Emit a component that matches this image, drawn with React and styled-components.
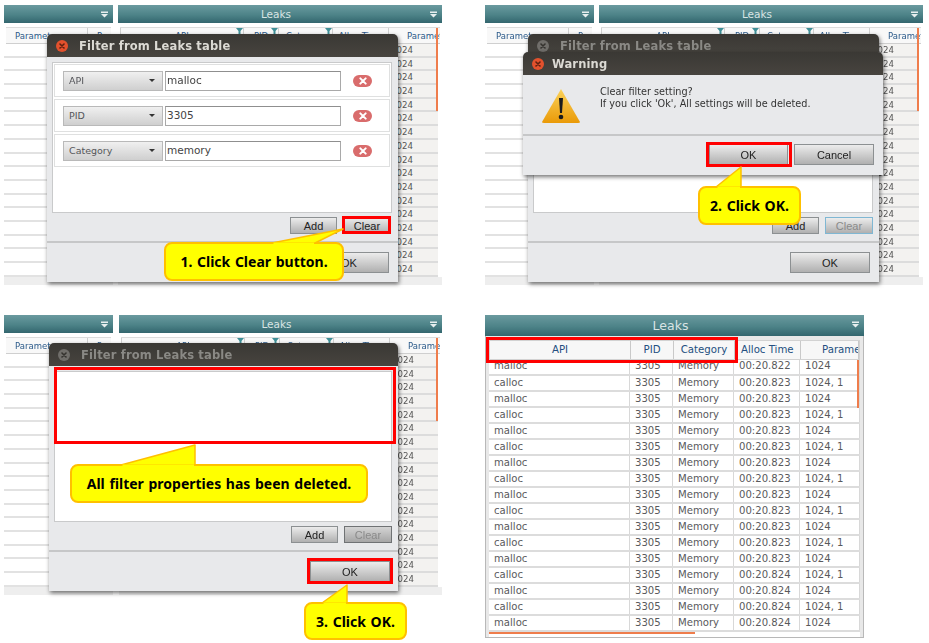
import React from 'react';
import styled, { createGlobalStyle } from 'styled-components';

const Global = createGlobalStyle`
  html, body {
    margin: 0;
    background: #fff;
    font-family: "DejaVu Sans", sans-serif;
  }
`;

const Page = styled.div`
  width: 929px;
  height: 643px;
  overflow: hidden;
  box-sizing: border-box;
  padding: 5px 0 0 4px;
  display: grid;
  grid-template-columns: 481px 444px;
  grid-template-rows: 310px 328px;
  filter: blur(0.3px);
`;

const Shot = styled.div`
  position: relative;
`;

const Desktop = styled.div`
  width: 438px;
  height: 280px;
  display: flex;
  gap: ${(p) => p.$gap}px;
  overflow: hidden;
`;

const Pane = styled.div`
  position: relative;
  width: ${(p) => (p.$wide ? 'auto' : '109px')};
  flex: ${(p) => (p.$wide ? 1 : 'none')};
  display: flex;
  flex-direction: column;
  background: #fff;
  min-width: 0;
  overflow: hidden;
`;

const PaneTitle = styled.div`
  position: relative;
  height: 18px;
  flex: none;
  display: flex;
  align-items: center;
  justify-content: center;
  padding-right: 8px;
  background: linear-gradient(#6a9a9f, #4d8388 55%, #33666e);
  color: #d9e4e4;
  font-size: 10.5px;
`;

const MenuMark = styled.svg`
  position: absolute;
  right: 5px;
  top: 6px;
  width: 7px;
  height: 7px;
`;

const Head = styled.div`
  height: 17px;
  margin: 4px 2px 0;
  flex: none;
  display: grid;
  grid-template-columns: ${(p) => p.$cols};
  background: #f8f8f8;
  border-top: 1px solid #dcdcdc;
  border-bottom: 1px solid #cfcfcf;
  box-sizing: border-box;
`;

const HeadCell = styled.div`
  position: relative;
  border-left: 1px solid ${(p) => (p.$plain ? 'transparent' : '#d0d0d0')};
  color: #2b5a8a;
  font-size: 8.5px;
  line-height: 16px;
  text-align: ${(p) => (p.$indent ? 'left' : 'center')};
  padding-left: ${(p) => p.$indent || 0}px;
  white-space: nowrap;
  overflow: hidden;
`;

const FunnelMark = styled.svg`
  position: absolute;
  right: 0;
  top: 0;
  width: 7px;
  height: 6px;
`;

const Rows = styled.div`
  flex: none;
  margin: 0 ${(p) => (p.$flush ? 2 : 4)}px 0 ${(p) => (p.$flush ? 0 : 2)}px;
`;

const PaneEdge = styled.div`
  flex: 1;
  background: #eeeeee;
`;

const BgRow = styled.div`
  height: 13.7px;
  box-sizing: border-box;
  padding-left: 271px;
  background: #f3f2f0;
  border-bottom: 2px solid #dcdcdc;
  color: #555;
  font-size: 8.6px;
  line-height: 12px;
  white-space: nowrap;
  overflow: hidden;
`;

const LeftRow = styled.div`
  height: 13.7px;
  box-sizing: border-box;
  border-bottom: 2px solid #e2e2e2;
  background: #fff;
`;

const ScrollY = styled.div`
  position: absolute;
  right: ${(p) => p.$right}px;
  top: ${(p) => p.$top}px;
  width: 2.5px;
  height: ${(p) => p.$h}px;
  background: #ef7d4c;
`;

const Dialog = styled.div`
  position: absolute;
  left: ${(p) => p.$left}px;
  top: ${(p) => p.$top}px;
  width: ${(p) => p.$w}px;
  height: ${(p) => p.$h}px;
  display: flex;
  flex-direction: column;
  background: #e8e9eb;
  border-radius: 5px 5px 0 0;
  box-shadow: 1px 2px 4px rgba(0, 0, 0, 0.55);
  overflow: hidden;
`;

const TitleBar = styled.div`
  height: 23px;
  flex: none;
  display: flex;
  align-items: center;
  padding-left: 9px;
  gap: ${(p) => p.$gap}px;
  background: linear-gradient(#3a3834, #47443f);
  color: ${(p) => (p.$dim ? '#8a8985' : '#dcdad4')};
  font-size: 11.5px;
  font-weight: bold;
  letter-spacing: 0.15px;
`;

const CloseDot = styled.div`
  width: 12px;
  height: 12px;
  border-radius: 50%;
  display: flex;
  align-items: center;
  justify-content: center;
  background: ${(p) => (p.$dim ? '#706e6a' : '#e2512d')};
  color: ${(p) => (p.$dim ? '#35332f' : '#5e2010')};
`;

const DialogBody = styled.div`
  height: 184px;
  flex: none;
  display: flex;
  flex-direction: column;
  box-sizing: border-box;
  padding: 5px 6px 0 5px;
`;

const ListBox = styled.div`
  height: 151px;
  flex: none;
  box-sizing: border-box;
  background: #fff;
  border: 1px solid #c9cacb;
  padding: 1px;
  display: flex;
  flex-direction: column;
  gap: 2px;
`;

const FilterRow = styled.div`
  height: 33px;
  flex: none;
  box-sizing: border-box;
  border: 1px solid #dfe0e0;
  display: flex;
  align-items: center;
  padding-left: 8px;
`;

const Combo = styled.div`
  width: 100px;
  height: 20px;
  box-sizing: border-box;
  display: flex;
  align-items: center;
  justify-content: space-between;
  padding: 0 7px 0 5px;
  border: 1px solid #b9b9b9;
  background: linear-gradient(#f0f0f0, #cfcfcf);
  color: #55565a;
  font-size: 9.5px;
`;

const ComboArrow = styled.span`
  width: 0;
  height: 0;
  border-left: 3.5px solid transparent;
  border-right: 3.5px solid transparent;
  border-top: 3.5px solid #333;
`;

const ValueInput = styled.div`
  width: 176px;
  height: 20px;
  margin-left: 2px;
  box-sizing: border-box;
  border: 1px solid #a9a9a9;
  border-top-color: #8f8f8f;
  padding-left: 1px;
  color: #444;
  font-size: 10.5px;
  line-height: 17px;
  background: #fff;
`;

const DeletePill = styled.div`
  width: 19px;
  height: 12px;
  margin-left: 12px;
  border-radius: 6px;
  background: #d96c6c;
  color: #fff;
  display: flex;
  align-items: center;
  justify-content: center;
`;

const ButtonRow = styled.div`
  height: 28px;
  flex: none;
  display: flex;
  justify-content: flex-end;
  align-items: flex-end;
  gap: 6px;
  padding: 0 ${(p) => p.$right}px 7px 0;
  box-sizing: border-box;
`;

const Button = styled.div`
  width: ${(p) => p.$w}px;
  height: ${(p) => p.$h}px;
  box-sizing: border-box;
  display: flex;
  align-items: center;
  justify-content: center;
  background: ${(p) => (p.$dark ? 'linear-gradient(#d4d4d4, #a6a6a6)' : 'linear-gradient(#ececec, #b0b0b0)')};
  border: 1px solid ${(p) => (p.$glow ? '#7fb7d3' : p.$dark ? '#6f7274' : '#8c9092')};
  color: ${(p) => (p.$off ? '#8a8a8a' : '#222')};
  font-family: "Liberation Sans", sans-serif;
  font-size: 11px;
`;

const Footer = styled.div`
  flex: 1;
  display: flex;
  align-items: center;
  justify-content: flex-end;
  gap: ${(p) => p.$gap || 0}px;
  padding-right: ${(p) => p.$right}px;
  padding-bottom: ${(p) => p.$lift || 0}px;
  box-sizing: border-box;
  border-top: 2px solid #c6c7c8;
`;

const RedFrame = styled.div`
  position: absolute;
  left: ${(p) => p.$x}px;
  top: ${(p) => p.$y}px;
  width: ${(p) => p.$w}px;
  height: ${(p) => p.$h}px;
  box-sizing: border-box;
  border: 3px solid #f00;
`;

const Callout = styled.div`
  position: absolute;
  left: ${(p) => p.$x}px;
  top: ${(p) => p.$y}px;
  width: ${(p) => p.$w}px;
  height: ${(p) => p.$h}px;
  box-sizing: border-box;
  display: flex;
  align-items: center;
  justify-content: center;
  background: #ffff00;
  border: 2px solid #ffc000;
  border-radius: 8px;
  color: #000;
  font-family: "Noto Sans", sans-serif;
  font-size: 14px;
  font-weight: 700;
  white-space: nowrap;
  word-spacing: 1px;
`;

const Tail = styled.svg`
  position: absolute;
  left: ${(p) => p.$x}px;
  top: ${(p) => p.$y}px;
  overflow: visible;
`;

const WarnBody = styled.div`
  height: 59px;
  flex: none;
  display: flex;
  align-items: flex-start;
  padding: 11px 0 0 18px;
  gap: 19px;
  box-sizing: border-box;
`;

const WarnIcon = styled.svg`
  margin-top: 2px;
  flex: none;
`;

const WarnText = styled.div`
  color: #333;
  font-size: 9.7px;
  line-height: 12.3px;
  white-space: nowrap;
`;

const Sheet = styled.div`
  width: 379px;
  height: 323px;
  display: flex;
  flex-direction: column;
  background: #f0f0f0;
`;

const Frame = styled.div`
  flex: 1;
  padding: 4px 3px 0 3px;
  display: flex;
  flex-direction: column;
  border: 1px solid #b8b8b8;
  border-top: 0;
  background: #e8e8e8;
  box-sizing: border-box;
  min-height: 0;
`;

const BigTitle = styled(PaneTitle)`
  height: 21px;
  font-size: 12.5px;
`;

const BigHead = styled.div`
  display: grid;
  grid-template-columns: ${(p) => p.$cols};
  height: 20px;
  flex: none;
  background: #f7f7f7;
  box-sizing: border-box;
  border: 1px solid #d2d2d2;
`;

const BigHeadCell = styled.div`
  border-right: 1px solid #c9c9c9;
  color: #234f80;
  font-size: 10.2px;
  line-height: 18px;
  text-align: ${(p) => (p.$indent ? 'left' : 'center')};
  padding-left: ${(p) => p.$indent || 0}px;
  white-space: nowrap;
  overflow: hidden;
`;

const BigRows = styled.div`
  position: relative;
  flex: 1;
  background: #fff;
  overflow: hidden;
`;

const BigRow = styled.div`
  height: 16px;
  display: grid;
  grid-template-columns: ${(p) => p.$cols};
  box-sizing: border-box;
  border-bottom: 2px solid #dcdcdc;
  color: #59595c;
  font-size: 10.1px;
  line-height: 13px;
  &:first-child {
    line-height: 12px;
  }
`;

const BigCell = styled.div`
  padding-left: 5px;
  border-right: 1px solid #d8d8d8;
  white-space: nowrap;
  overflow: hidden;
`;

const ScrollX = styled.div`
  position: absolute;
  left: 0;
  bottom: 3px;
  width: 206px;
  height: 2.5px;
  background: #ef7d4c;
`;

const BG_COLS = '123px 35px 54px 56px 1fr';
const BIG_COLS = '141px 43px 61px 66px 1fr';

const leakRows = [
  ['malloc', '00:20.822'],
  ['calloc', '00:20.823'],
  ['malloc', '00:20.823'],
  ['calloc', '00:20.823'],
  ['malloc', '00:20.823'],
  ['calloc', '00:20.823'],
  ['malloc', '00:20.823'],
  ['calloc', '00:20.823'],
  ['malloc', '00:20.823'],
  ['calloc', '00:20.823'],
  ['malloc', '00:20.823'],
  ['calloc', '00:20.823'],
  ['malloc', '00:20.823'],
  ['calloc', '00:20.824'],
  ['malloc', '00:20.824'],
  ['calloc', '00:20.824'],
  ['malloc', '00:20.824'],
];

const filters = [
  ['API', 'malloc'],
  ['PID', '3305'],
  ['Category', 'memory'],
];

const XMark = ({ size = 6, weight = 1.6 }) => (
  <svg width={size} height={size} viewBox="0 0 6 6">
    <path d="M1 1 L5 5 M5 1 L1 5" stroke="currentColor" strokeWidth={weight} fill="none" strokeLinecap="round" />
  </svg>
);

const Menu = () => (
  <MenuMark viewBox="0 0 7 7">
    <path d="M0 0.5 H7 V2 H0 Z M0 3 H7 L3.5 6.5 Z" fill="#e8efef" />
  </MenuMark>
);

const Funnel = () => (
  <FunnelMark viewBox="0 0 7 6">
    <path d="M0 0 H7 L4.5 3 V6 H2.5 V3 Z" fill="#3f8f97" />
  </FunnelMark>
);

// Tails are drawn over the callout so the yellow runs into it without a border line
const CalloutTail = ({ x, y, w, h, from, to, apex }) => (
  <Tail $x={x} $y={y} width={w} height={h}>
    <path d={`M${from} ${h} L${apex} 0 L${to} ${h} Z`} fill="#ffff00" stroke="#ffc000" strokeWidth="1.5" strokeLinejoin="round" />
    <path d={`M${from + 1.5} ${h + 0.7} H${to - 1}`} stroke="#ffff00" strokeWidth="2.4" />
  </Tail>
);

function BackgroundApp({ gap = 5 }) {
  return (
    <Desktop $gap={gap}>
      <Pane>
        <PaneTitle>
          <Menu />
        </PaneTitle>
        <Head $cols="1fr 24px">
          <HeadCell $plain $indent={8}>Paramet</HeadCell>
          <HeadCell>P</HeadCell>
        </Head>
        <Rows $flush>
          {leakRows.map((r, i) => (
            <LeftRow key={i} />
          ))}
        </Rows>
        <PaneEdge />
      </Pane>
      <Pane $wide>
        <PaneTitle>
          Leaks
          <Menu />
        </PaneTitle>
        <Head $cols={BG_COLS}>
          <HeadCell>API<Funnel /></HeadCell>
          <HeadCell>PID<Funnel /></HeadCell>
          <HeadCell>Category<Funnel /></HeadCell>
          <HeadCell>Alloc Time</HeadCell>
          <HeadCell $indent={18}>Parameter</HeadCell>
        </Head>
        <Rows>
          {leakRows.map((r, i) => (
            <BgRow key={i}>1024</BgRow>
          ))}
        </Rows>
        <PaneEdge />
        <ScrollY $right={4} $top={23} $h={83} />
      </Pane>
    </Desktop>
  );
}

function FilterDialog({ left = 43, top = 29, width = 351, okRight = 9, rowRight = 1, dim, clearOff, clearGlow, clearDark, empty }) {
  return (
    <Dialog $left={left} $top={top} $w={width} $h={248}>
      <TitleBar $dim={dim} $gap={11}>
        <CloseDot $dim={dim}><XMark /></CloseDot>
        Filter from Leaks table
      </TitleBar>
      <DialogBody>
        <ListBox>
          {!empty && filters.map(([name, value]) => (
            <FilterRow key={name}>
              <Combo>
                {name}
                <ComboArrow />
              </Combo>
              <ValueInput>{value}</ValueInput>
              <DeletePill><XMark size={8} weight={1.5} /></DeletePill>
            </FilterRow>
          ))}
        </ListBox>
        <ButtonRow $right={rowRight}>
          <Button $w={47} $h={17}>Add</Button>
          <Button $w={48} $h={17} $off={clearOff} $glow={clearGlow} $dark={clearDark}>Clear</Button>
        </ButtonRow>
      </DialogBody>
      <Footer $right={okRight}>
        <Button $w={80} $h={21}>OK</Button>
      </Footer>
    </Dialog>
  );
}

function WarningDialog() {
  return (
    <Dialog $left={38} $top={47} $w={360} $h={123}>
      <TitleBar $gap={8}>
        <CloseDot><XMark /></CloseDot>
        Warning
      </TitleBar>
      <WarnBody>
        <WarnIcon width="40" height="36" viewBox="0 0 40 36">
          <defs>
            <linearGradient id="warn" x1="0" y1="0" x2="0" y2="1">
              <stop offset="0" stopColor="#fbd25a" />
              <stop offset="1" stopColor="#ea9a08" />
            </linearGradient>
          </defs>
          <path d="M20 1 L39 34 Q39 35 37 35 H3 Q1 35 1 34 Z" fill="url(#warn)" />
          <path d="M18 10 H22 L21 25 H19 Z" fill="#1c1c1c" />
          <circle cx="20" cy="29" r="2.3" fill="#1c1c1c" />
        </WarnIcon>
        <WarnText>
          Clear filter setting?
          <br />
          If you click 'Ok', All settings will be deleted.
        </WarnText>
      </WarnBody>
      <Footer $right={9} $gap={6} $lift={2}>
        <Button $w={79} $h={21}>OK</Button>
        <Button $w={80} $h={21}>Cancel</Button>
      </Footer>
    </Dialog>
  );
}

function LeaksTable() {
  return (
    <Sheet>
      <BigTitle>
        Leaks
        <Menu />
      </BigTitle>
      <Frame>
        <BigHead $cols={BIG_COLS}>
          <BigHeadCell>API</BigHeadCell>
          <BigHeadCell>PID</BigHeadCell>
          <BigHeadCell>Category</BigHeadCell>
          <BigHeadCell $indent={6}>Alloc Time</BigHeadCell>
          <BigHeadCell $indent={21}>Parameter</BigHeadCell>
        </BigHead>
        <BigRows>
          {leakRows.map((r, i) => (
            <BigRow key={i} $cols={BIG_COLS}>
              <BigCell>{r[0]}</BigCell>
              <BigCell>3305</BigCell>
              <BigCell>Memory</BigCell>
              <BigCell>{r[1]}</BigCell>
              <BigCell>{i % 2 ? '1024, 1' : '1024'}</BigCell>
            </BigRow>
          ))}
          <ScrollY $right={1} $top={0} $h={48} />
          <ScrollX />
        </BigRows>
      </Frame>
    </Sheet>
  );
}

export default function App() {
  return (
    <Page>
      <Global />

      <Shot>
        <BackgroundApp />
        <FilterDialog />
        <RedFrame $x={338} $y={211} $w={49} $h={18} />
        <Callout $x={160} $y={237} $w={180} $h={39}>1. Click Clear button.</Callout>
        <CalloutTail x={268} y={224} w={72} h={14} from={0} to={43} apex={71} />
      </Shot>

      <Shot>
        <BackgroundApp />
        <FilterDialog dim clearOff clearGlow rowRight={0} />
        <WarningDialog />
        <RedFrame $x={221} $y={137} $w={86} $h={25} />
        <Callout $x={213} $y={181} $w={103} $h={39}>2. Click OK.</Callout>
        <CalloutTail x={231} y={162} w={26} h={20} from={0} to={25} apex={25} />
      </Shot>

      <Shot>
        <BackgroundApp gap={6} />
        <FilterDialog left={45} top={28} width={349} okRight={8} rowRight={0} dim clearOff clearDark empty />
        <RedFrame $x={50} $y={52} $w={342} $h={77} />
        <Callout $x={66} $y={149} $w={298} $h={39}>All filter properties has been deleted.</Callout>
        <CalloutTail x={117} y={130} w={75} h={20} from={0} to={74} apex={74} />
        <RedFrame $x={303} $y={243} $w={86} $h={26} />
        <Callout $x={300} $y={287} $w={103} $h={38}>3. Click OK.</Callout>
        <CalloutTail x={318} y={270} w={26} h={18} from={0} to={25} apex={25} />
      </Shot>

      <Shot>
        <LeaksTable />
        <RedFrame $x={1} $y={22} $w={252} $h={26} />
      </Shot>
    </Page>
  );
}
